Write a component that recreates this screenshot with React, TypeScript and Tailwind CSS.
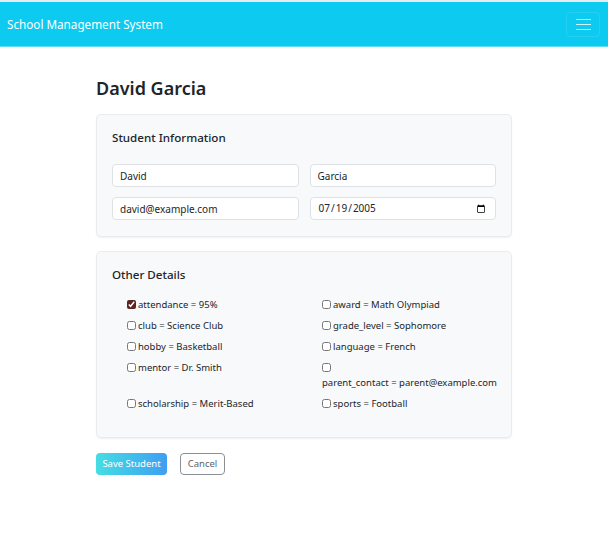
import React from "react";

const details: { key: string; value: string; checked?: boolean }[] = [
    { key: "attendance", value: "95%", checked: true },
    { key: "award", value: "Math Olympiad" },
    { key: "club", value: "Science Club" },
    { key: "grade_level", value: "Sophomore" },
    { key: "hobby", value: "Basketball" },
    { key: "language", value: "French" },
    { key: "mentor", value: "Dr. Smith" },
    { key: "parent_contact", value: "parent@example.com" },
    { key: "scholarship", value: "Merit-Based" },
    { key: "sports", value: "Football" },
];

const inputClass =
    "h-[23px] w-full rounded-[4px] border border-[#dee2e6] bg-white px-[7px] text-[10px] text-[#212529] outline-none";

const App: React.FC = () => {
    return (
        <div className="min-h-[556px] bg-white font-['Noto_Sans',sans-serif] text-[#212529]">
            <nav className="flex h-[47px] items-center justify-between border-t-2 border-b border-t-[#e9ecef] border-b-[#5fdcf5] bg-[#0dcaf0] pl-[7px] pr-[8px]">
                <span className="mt-[2px] text-[11.7px] text-white">School Management System</span>
                <button className="flex h-[25px] w-[34px] flex-col items-center justify-center gap-[4px] rounded-[4px] border border-white/10">
                    <span className="block h-px w-[15px] bg-white/80" />
                    <span className="block h-px w-[15px] bg-white/80" />
                    <span className="block h-px w-[15px] bg-white/80" />
                </button>
            </nav>

            <div className="mx-auto w-[416px] pt-[29px]">
                <h1 className="mb-[14px] text-[18px] leading-[24px] font-semibold">David Garcia</h1>

                <div className="mb-[14px] rounded-[5px] border border-[#e9ecef] bg-[#f8f9fa] px-[15px] pt-[14px] pb-[16px] shadow-[0_1px_2px_rgba(0,0,0,0.06)]">
                    <h2 className="mb-[17px] text-[11.6px] leading-[18px] font-medium">Student Information</h2>
                    <div className="grid grid-cols-2 gap-x-[11px] gap-y-[10px]">
                        <input className={inputClass} defaultValue="David" />
                        <input className={inputClass} defaultValue="Garcia" />
                        <input className={inputClass} defaultValue="david@example.com" />
                        <input className={inputClass} type="date" defaultValue="2005-07-19" />
                    </div>
                </div>

                <div className="mb-[15px] rounded-[5px] border border-[#e9ecef] bg-[#f8f9fa] px-[15px] pt-[14px] pb-[26px] shadow-[0_1px_2px_rgba(0,0,0,0.06)]">
                    <h2 className="mb-[13px] text-[11.6px] leading-[18px] font-medium">Other Details</h2>
                    <div className="grid grid-cols-[175px_175px] gap-x-[20px] gap-y-[6px] px-[15px]">
                        {details.map((d) => (
                            <label key={d.key} className="flex flex-wrap items-start text-[9.5px] leading-[15px]">
                                <span className="mr-[2px] flex h-[15px] items-center">
                                    <input
                                        type="checkbox"
                                        defaultChecked={d.checked}
                                        className="m-0 h-[9px] w-[9px] accent-[#5c2323]"
                                    />
                                </span>
                                <span>
                                    {d.key} = {d.value}
                                </span>
                            </label>
                        ))}
                    </div>
                </div>

                <div className="flex gap-[13px]">
                    <button className="h-[22px] w-[71px] rounded-[4px] bg-gradient-to-r from-[#46dde3] to-[#3f9ef2] text-[9.5px] text-white">
                        Save Student
                    </button>
                    <button className="h-[22px] w-[45px] rounded-[4px] border border-[#8a9096] bg-white text-[9.5px] text-[#5c636a]">
                        Cancel
                    </button>
                </div>
            </div>
        </div>
    );
};

export default App;
